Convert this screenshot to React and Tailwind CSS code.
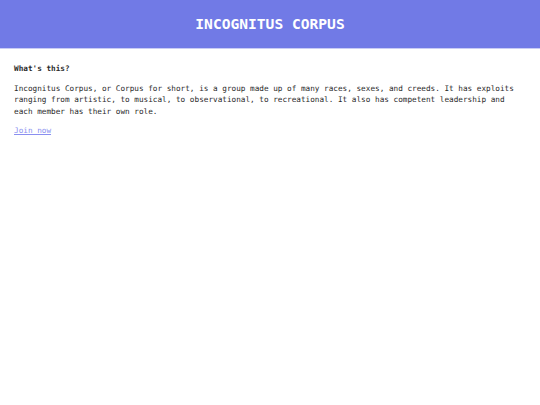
export default function App() {
  return (
    <div className="min-h-[405px] bg-white font-['DejaVu_Sans_Mono',monospace]">
      {/* Header */}
      <header className="h-[49px] bg-[#717ae6] border-b border-[#c9ccf5] flex items-center justify-center">
        <h1 className="text-[14.6px] font-bold text-white">INCOGNITUS CORPUS</h1>
      </header>

      {/* Content */}
      <main className="px-[14px] pt-[14px] text-[#2a2a2a]">
        <h2 className="text-[7.7px] font-bold leading-[11.5px] mb-[8px]">What's this?</h2>
        <p className="text-[7.7px] leading-[11.5px] mb-[8px]">
          Incognitus Corpus, or Corpus for short, is a group made up of many races, sexes, and creeds. It has exploits
          ranging from artistic, to musical, to observational, to recreational. It also has competent leadership and
          each member has their own role.
        </p>
        <a href="#" className="block w-fit text-[7.7px] leading-[11.5px] text-[#8a8ff0] underline">Join now</a>
      </main>
    </div>
  );
}
